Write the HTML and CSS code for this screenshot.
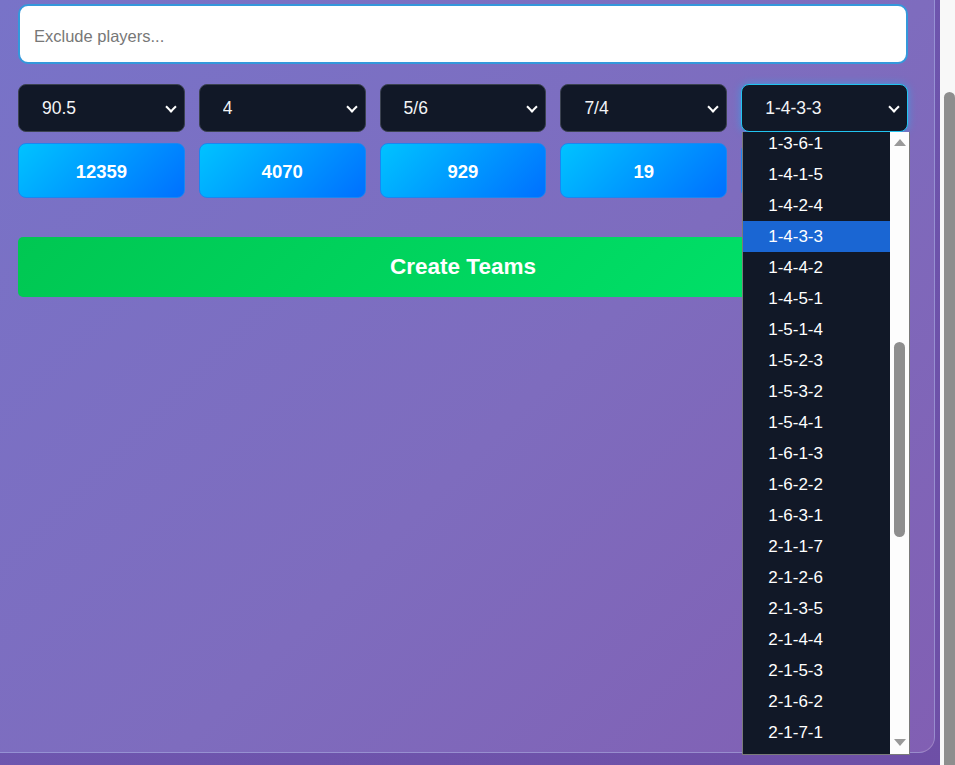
FILE: index.html
```html
<!DOCTYPE html>
<html lang="en">
<head>
    <meta charset="UTF-8">
    <meta name="viewport" content="width=device-width, initial-scale=1.0">
    <title>Team Builder</title>
    <link rel="stylesheet" href="styles.css">
</head>
<body>
    <div class="page">
        <div class="panel">
            <input class="exclude-input" type="text" placeholder="Exclude players...">

            <div class="select-row">
                <div class="select-wrap"><select class="pick"><option>90.5</option></select></div>
                <div class="select-wrap"><select class="pick"><option>4</option></select></div>
                <div class="select-wrap"><select class="pick"><option>5/6</option></select></div>
                <div class="select-wrap"><select class="pick"><option>7/4</option></select></div>
                <div class="select-wrap open">
                    <select class="pick focused"><option>1-4-3-3</option></select>
                    <!-- open option list -->
                    <div class="option-list">
                        <ul class="options">
                            <li>1-3-6-1</li>
                            <li>1-4-1-5</li>
                            <li>1-4-2-4</li>
                            <li class="selected">1-4-3-3</li>
                            <li>1-4-4-2</li>
                            <li>1-4-5-1</li>
                            <li>1-5-1-4</li>
                            <li>1-5-2-3</li>
                            <li>1-5-3-2</li>
                            <li>1-5-4-1</li>
                            <li>1-6-1-3</li>
                            <li>1-6-2-2</li>
                            <li>1-6-3-1</li>
                            <li>2-1-1-7</li>
                            <li>2-1-2-6</li>
                            <li>2-1-3-5</li>
                            <li>2-1-4-4</li>
                            <li>2-1-5-3</li>
                            <li>2-1-6-2</li>
                            <li>2-1-7-1</li>
                        </ul>
                        <div class="list-scroll">
                            <span class="arrow up"></span>
                            <span class="list-thumb"></span>
                            <span class="arrow down"></span>
                        </div>
                    </div>
                </div>
            </div>

            <div class="count-row">
                <button class="count-btn">12359</button>
                <button class="count-btn">4070</button>
                <button class="count-btn">929</button>
                <button class="count-btn">19</button>
                <!-- covered by the open list -->
                <button class="count-btn"></button>
            </div>

            <button class="create-btn">Create Teams</button>
        </div>
    </div>
    <div class="page-scroll">
        <span class="page-thumb"></span>
    </div>
</body>
</html>
```

FILE: styles.css
```css
  body {
      margin: 0;
      height: 765px;
      overflow: hidden;
      display: flex;
      background: linear-gradient(135deg, #6d5cb6, #6e4fa6);
      font-family: "Liberation Sans", Arial, sans-serif;
  }

  .page {
      width: 940px;
  }

  /* main card */
  .panel {
      box-sizing: border-box;
      width: 935px;
      height: 753px;
      padding: 4px 26px 0 17px;
      background: linear-gradient(135deg, #7873c8, #7e6cbe 55%, #815fb3);
      border: 1px solid rgba(255, 255, 255, 0.22);
      border-top: none;
      border-left: none;
      border-radius: 0 0 16px 0;
  }

  .exclude-input {
      display: block;
      box-sizing: border-box;
      width: 890px;
      height: 60px;
      margin-left: 1px;
      padding: 4px 14px 0;
      border: 2px solid #3498db;
      border-radius: 10px;
      background: #fff;
      font-family: "Liberation Sans", Arial, sans-serif;
      font-size: 16.5px;
      outline: none;
  }
  .exclude-input::placeholder {
      color: #777;
  }

  .select-row, .count-row {
      display: grid;
      grid-template-columns: repeat(5, 1fr);
      gap: 14px;
      width: 890px;
      margin-left: 1px;
  }

  .select-row {
      margin-top: 20px;
  }

  .select-wrap {
      position: relative;
  }
  .select-wrap::after {
      content: "";
      position: absolute;
      right: 10px;
      top: 19px;
      width: 6px;
      height: 6px;
      border-right: 2px solid #fff;
      border-bottom: 2px solid #fff;
      transform: rotate(45deg);
      pointer-events: none;
  }

  .pick {
      appearance: none;
      -webkit-appearance: none;
      box-sizing: border-box;
      width: 100%;
      height: 48px;
      padding: 0 23px;
      background: #111827;
      color: #f3f4f6;
      border: 1px solid #3b4250;
      border-radius: 8px;
      font-family: "Liberation Sans", Arial, sans-serif;
      font-size: 17.5px;
      outline: none;
  }
  .pick.focused {
      border-color: #22c4f0;
      box-shadow: 0 0 8px rgba(0, 200, 255, 0.45);
  }

  /* open dropdown */
  .option-list {
      position: absolute;
      top: 100%;
      left: 1px;
      z-index: 5;
      box-sizing: border-box;
      width: 168px;
      height: 623px;
      display: flex;
      background: #111827;
      border: 1px solid #7a7a7a;
      border-top: none;
      overflow: hidden;
  }
  .options {
      list-style: none;
      margin: -4px 0 0;
      padding: 0;
      flex: 1;
  }
  .options li {
      height: 31px;
      line-height: 32px;
      padding-left: 25px;
      color: #fff;
      font-size: 17px;
  }
  .options li.selected {
      background: #1a66d3;
  }

  .list-scroll {
      position: relative;
      width: 19px;
      background: #fdfdfd;
  }
  .list-thumb {
      position: absolute;
      left: 4px;
      top: 210px;
      width: 11px;
      height: 195px;
      border-radius: 6px;
      background: #8e8e8e;
  }
  .arrow {
      position: absolute;
      left: 4px;
      width: 0;
      height: 0;
      border-left: 6px solid transparent;
      border-right: 6px solid transparent;
  }
  .arrow.up {
      top: 7px;
      border-bottom: 7px solid #999;
  }
  .arrow.down {
      bottom: 8px;
      border-top: 7px solid #999;
  }

  .count-row {
      margin-top: 11px;
  }

  .count-btn {
      height: 55px;
      padding-top: 3px;
      background: linear-gradient(135deg, #00c3ff, #0070ff);
      border: 1px solid #1c86f0;
      border-radius: 8px;
      color: #fff;
      font-family: "Liberation Sans", Arial, sans-serif;
      font-size: 18.5px;
      font-weight: bold;
  }

  .create-btn {
      display: block;
      width: 890px;
      height: 60px;
      margin: 39px 0 0 1px;
      background: linear-gradient(135deg, #00c752, #00e46c);
      border: none;
      border-radius: 5px;
      color: #fff;
      font-family: "Liberation Sans", Arial, sans-serif;
      font-size: 22.5px;
      font-weight: bold;
  }

  /* fake page scrollbar */
  .page-scroll {
      position: relative;
      width: 15px;
      background: #f8f8f8;
  }
  .page-thumb {
      position: absolute;
      left: 4px;
      top: 92px;
      width: 11px;
      height: 700px;
      border-radius: 6px 6px 0 0;
      background: #8e8e8e;
  }
```
